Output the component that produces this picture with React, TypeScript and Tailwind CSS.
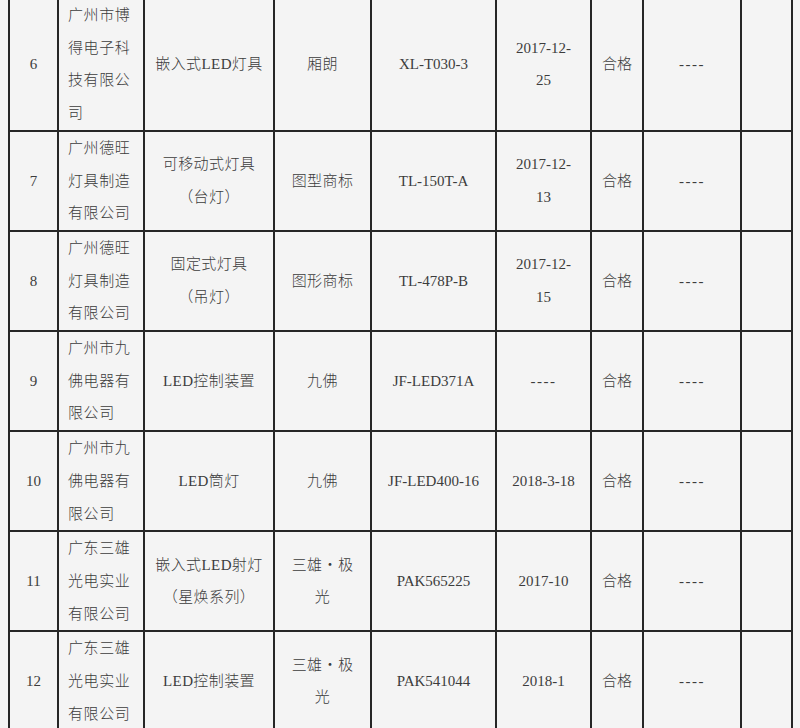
import React from "react";

type Row = {
  no: string;
  company: string[];
  product: string[];
  brand: string[];
  model: string;
  date: string[];
};

const rows: Row[] = [
  { no: "6", company: ["广州市博", "得电子科", "技有限公", "司"], product: ["嵌入式LED灯具"], brand: ["厢朗"], model: "XL-T030-3", date: ["2017-12-", "25"] },
  { no: "7", company: ["广州德旺", "灯具制造", "有限公司"], product: ["可移动式灯具", "（台灯）"], brand: ["图型商标"], model: "TL-150T-A", date: ["2017-12-", "13"] },
  { no: "8", company: ["广州德旺", "灯具制造", "有限公司"], product: ["固定式灯具", "（吊灯）"], brand: ["图形商标"], model: "TL-478P-B", date: ["2017-12-", "15"] },
  { no: "9", company: ["广州市九", "佛电器有", "限公司"], product: ["LED控制装置"], brand: ["九佛"], model: "JF-LED371A", date: ["----"] },
  { no: "10", company: ["广州市九", "佛电器有", "限公司"], product: ["LED筒灯"], brand: ["九佛"], model: "JF-LED400-16", date: ["2018-3-18"] },
  { no: "11", company: ["广东三雄", "光电实业", "有限公司"], product: ["嵌入式LED射灯", "（星焕系列）"], brand: ["三雄・极", "光"], model: "PAK565225", date: ["2017-10"] },
  { no: "12", company: ["广东三雄", "光电实业", "有限公司"], product: ["LED控制装置"], brand: ["三雄・极", "光"], model: "PAK541044", date: ["2018-1"] },
];

function Lines({ lines }: { lines: string[] }) {
  return (
    <>
      {lines.map((l, i) => (
        <div key={i} className={l === "----" ? "whitespace-nowrap tracking-[1.5px]" : "whitespace-nowrap"}>
          {l}
        </div>
      ))}
    </>
  );
}

const cell =
  "border-2 border-[#262626] px-0 py-0 text-center align-middle font-['Liberation_Serif','Times_New_Roman','Noto_Sans_CJK_SC',serif]";

export default function App() {
  return (
    <div className="min-h-[728px] w-[800px] overflow-hidden bg-[#f4f4f4] text-[#3c3c3c] font-light font-['Liberation_Serif','Noto_Sans_CJK_SC',serif]">
      <table className="ml-[8px] mt-[-3px] w-[785px] table-fixed border-collapse text-[15px] leading-[32.7px]">
        <colgroup>
          <col className="w-[49px]" />
          <col className="w-[86px]" />
          <col className="w-[130px]" />
          <col className="w-[97px]" />
          <col className="w-[125px]" />
          <col className="w-[95px]" />
          <col className="w-[52px]" />
          <col className="w-[98px]" />
          <col className="w-[51px]" />
        </colgroup>
        <tbody>
          {rows.map((r) => (
            <tr key={r.no}>
              <td className={cell}>{r.no}</td>
              <td className={`${cell} !text-left pl-[9px] tracking-[0.6px]`}>
                <Lines lines={r.company} />
              </td>
              <td className={`${cell} tracking-[0.4px]`}>
                <Lines lines={r.product} />
              </td>
              <td className={`${cell} tracking-[0.4px]`}>
                <Lines lines={r.brand} />
              </td>
              <td className={cell}>{r.model}</td>
              <td className={cell}>
                <Lines lines={r.date} />
              </td>
              <td className={cell}>合格</td>
              <td className={`${cell} tracking-[1.5px]`}>----</td>
              <td className={cell}></td>
            </tr>
          ))}
        </tbody>
      </table>
    </div>
  );
}
